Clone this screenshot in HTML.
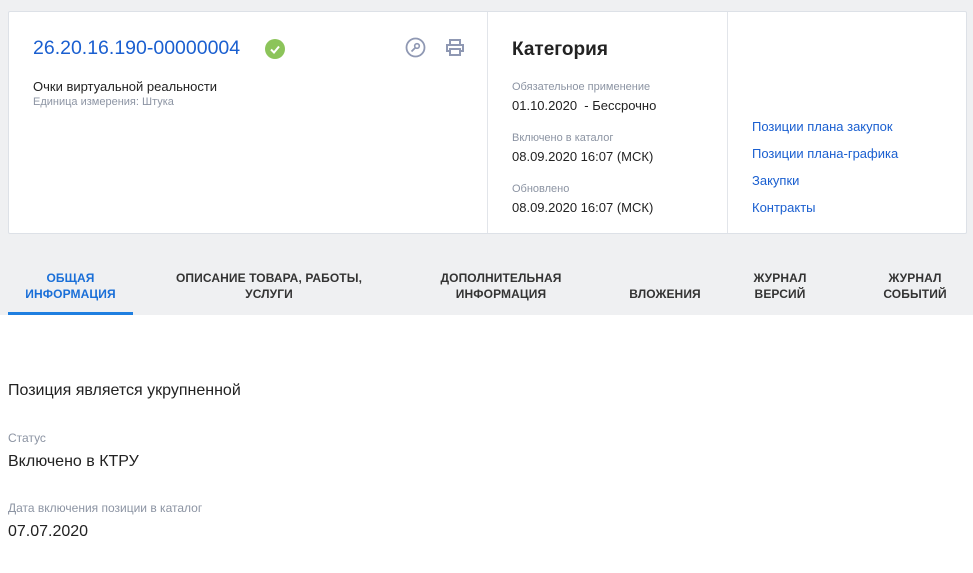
<!DOCTYPE html>
<html><head><meta charset="utf-8"><style>
*{margin:0;padding:0;box-sizing:border-box}
body{width:973px;height:573px;background:#fff;font-family:"Liberation Sans",sans-serif;color:#222;position:relative;overflow:hidden}
.top{position:absolute;left:0;top:0;width:973px;height:315px;background:#eff0f2}
.card{position:absolute;left:8px;top:11px;width:959px;height:223px;background:#fff;border:1px solid #dde1e7;border-radius:2px}
.div{position:absolute;top:0;width:1px;height:221px;background:#e2e5ea}
.abs{position:absolute;white-space:nowrap}
.lbl{font-size:11px;color:#8c94a3}
.val{font-size:13px;color:#222}
.link{font-size:13px;color:#1a5fd0}
.tab{position:absolute;top:270px;font-size:12px;font-weight:bold;color:#333;text-align:center;line-height:16px;letter-spacing:0.1px}
</style></head><body>
<div class="top"></div>
<div class="card">
<div class="div" style="left:478px"></div>
<div class="div" style="left:718px"></div>
<div class="abs" style="left:24px;top:25px;font-size:19.5px;color:#1a5fd0">26.20.16.190-00000004</div>
<svg class="abs" style="left:256px;top:27px" width="20" height="20"><circle cx="10" cy="10" r="10" fill="#8cc45a"/><path d="M6 10.5l3 3 5-6" stroke="#fff" stroke-width="2" fill="none"/></svg>
<svg class="abs" style="left:396px;top:25px" width="21" height="21"><circle cx="10.5" cy="10.5" r="9" stroke="#8f98b3" stroke-width="1.8" fill="none"/><circle cx="12" cy="9" r="2.3" stroke="#8f98b3" stroke-width="1.6" fill="none"/><path d="M10.5 10.5L6.5 14.5" stroke="#8f98b3" stroke-width="1.8"/></svg>
<svg class="abs" style="left:436px;top:26px" width="20" height="19"><path d="M5 6V2h10v4M5 13H2V7h16v6h-3M5 11h10v6H5z" stroke="#8f98b3" stroke-width="2" fill="none"/></svg>
<div class="abs val" style="left:24px;top:67px">Очки виртуальной реальности</div>
<div class="abs lbl" style="left:24px;top:84px">Единица измерения: Штука</div>
<div class="abs" style="left:503px;top:27px;font-size:19px;font-weight:bold;color:#222">Категория</div>
<div class="abs lbl" style="left:503px;top:69px">Обязательное применение</div>
<div class="abs val" style="left:503px;top:86px">01.10.2020&nbsp; - Бессрочно</div>
<div class="abs lbl" style="left:503px;top:120px">Включено в каталог</div>
<div class="abs val" style="left:503px;top:137px">08.09.2020 16:07 (МСК)</div>
<div class="abs lbl" style="left:503px;top:171px">Обновлено</div>
<div class="abs val" style="left:503px;top:188px">08.09.2020 16:07 (МСК)</div>
<div class="abs link" style="left:743px;top:107px">Позиции плана закупок</div>
<div class="abs link" style="left:743px;top:134px">Позиции плана-графика</div>
<div class="abs link" style="left:743px;top:161px">Закупки</div>
<div class="abs link" style="left:743px;top:188px">Контракты</div>
</div>
<div class="tab" style="left:8px;width:125px;color:#1a6fd8">ОБЩАЯ<br>ИНФОРМАЦИЯ</div>
<div class="abs" style="left:8px;top:312px;width:125px;height:3px;background:#1f7fe0"></div>
<div class="tab" style="left:165px;width:208px">ОПИСАНИЕ ТОВАРА, РАБОТЫ,<br>УСЛУГИ</div>
<div class="tab" style="left:420px;width:162px">ДОПОЛНИТЕЛЬНАЯ<br>ИНФОРМАЦИЯ</div>
<div class="tab" style="left:620px;width:90px;top:286px">ВЛОЖЕНИЯ</div>
<div class="tab" style="left:740px;width:80px">ЖУРНАЛ<br>ВЕРСИЙ</div>
<div class="tab" style="left:870px;width:90px">ЖУРНАЛ<br>СОБЫТИЙ</div>
<div class="abs" style="left:8px;top:382px;font-size:16px;color:#222">Позиция является укрупненной</div>
<div class="abs" style="left:8px;top:431px;font-size:12px;color:#8c94a3">Статус</div>
<div class="abs" style="left:8px;top:453px;font-size:16px;color:#222">Включено в КТРУ</div>
<div class="abs" style="left:8px;top:501px;font-size:12px;color:#8c94a3">Дата включения позиции в каталог</div>
<div class="abs" style="left:8px;top:523px;font-size:16px;color:#222">07.07.2020</div>
</body></html>
